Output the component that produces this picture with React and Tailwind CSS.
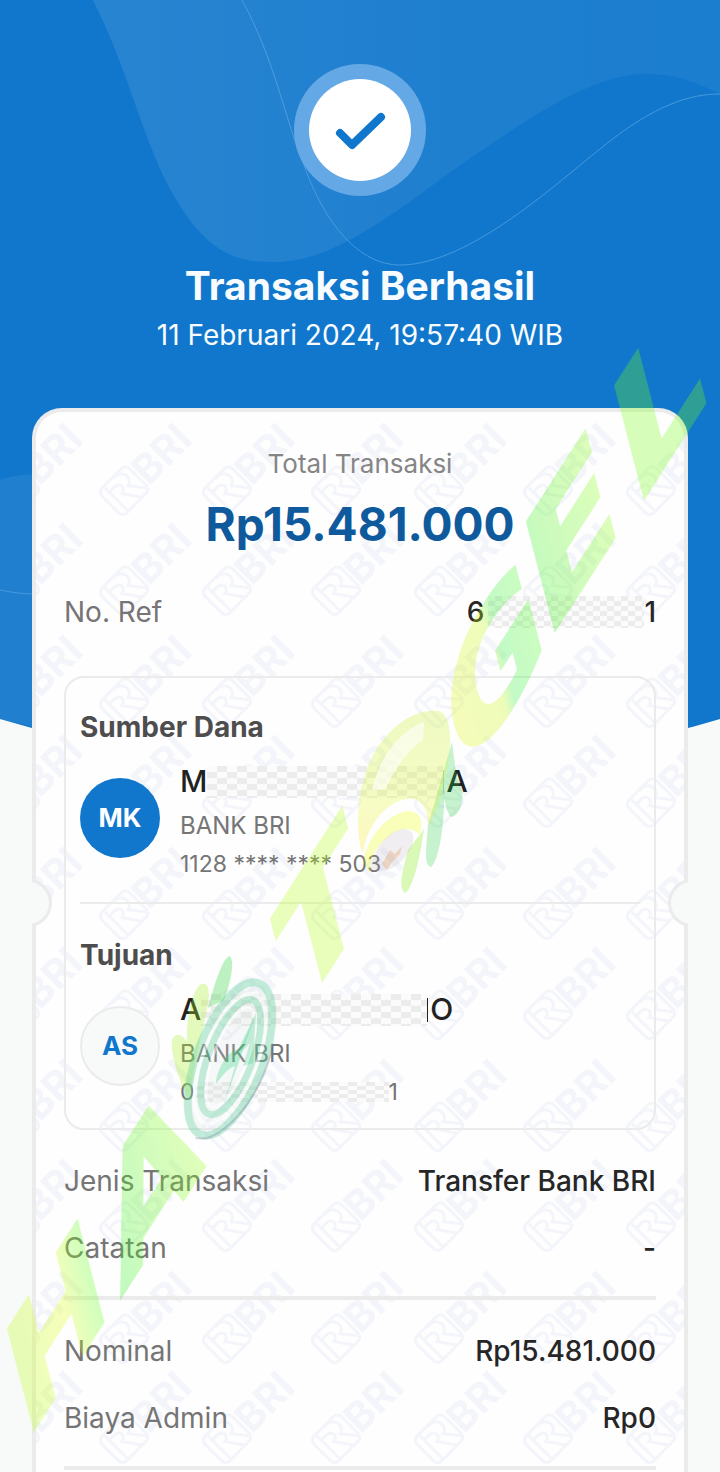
import React from "react";

const LOGO_SPOTS = [
  [28, 67],
  [131, 67],
  [28, 167],
  [131, 167],
];

function Backdrop() {
  return (
    <svg
      className="absolute top-0 left-0 w-full h-auto"
      viewBox="0 0 720 800"
      aria-hidden="true"
    >
      <defs>
        <linearGradient id="wave" x1="90" y1="0" x2="720" y2="0" gradientUnits="userSpaceOnUse">
          <stop offset="0" stopColor="#ffffff" stopOpacity="0.1" />
          <stop offset="0.6" stopColor="#ffffff" stopOpacity="0.06" />
          <stop offset="1" stopColor="#ffffff" stopOpacity="0.05" />
        </linearGradient>
      </defs>
      <path d="M0 0H720V719C500 785 220 785 0 719Z" fill="#1077cc" />
      <path
        d="M93 0C128 70 140 130 168 185C210 265 248 262 280 262C350 258 420 190 490 145C545 107 600 74 645 74C680 74 700 84 720 94V0Z"
        fill="url(#wave)"
      />
      <path
        d="M242 0C275 60 285 120 304 165C325 225 360 265 400 265C470 265 560 180 605 145C655 105 690 94 720 94"
        fill="none"
        stroke="#5fa6e3"
        strokeOpacity="0.7"
      />
      <path d="M0 480C12 476 24 474 40 474V728L0 719Z" fill="#ffffff" fillOpacity="0.07" />
      <path d="M0 590C15 593 24 594 40 594" fill="none" stroke="#5fa6e3" strokeOpacity="0.6" />
    </svg>
  );
}

function LogoPattern() {
  return (
    <svg className="absolute inset-0 h-full w-full" aria-hidden="true">
      <defs>
        <pattern id="bri" x="60" y="11" width="212" height="212" patternUnits="userSpaceOnUse">
          {LOGO_SPOTS.map(([x, y]) => (
            <g key={`${x}-${y}`} transform={`translate(${x} ${y}) rotate(-45)`}>
              <rect x="-20" y="-17" width="39" height="35" rx="6" fill="none" stroke="#f3f5fa" strokeWidth="3" />
              <path
                d="M-12 -16V17M-12 -9H-6C3 -9 3 0 -4 1L7 17M0 -16H5C14 -13 14 -3 6 0L18 15"
                fill="none"
                stroke="#f3f5fa"
                strokeWidth="3"
              />
              <text x="20" y="15" fontSize="40" fontWeight="700" fill="#f3f5fa" fontFamily="Inter, sans-serif">
                BRI
              </text>
            </g>
          ))}
        </pattern>
      </defs>
      <rect width="100%" height="100%" fill="url(#bri)" />
    </svg>
  );
}

const LETTERS = [
  { ch: "H", x: 25, y: 1444, size: 142, fill: "url(#lime)" },
  { ch: "A", x: 121, y: 1298, size: 148, fill: "url(#leaf)" },
  { ch: "T", x: 297, y: 1020, size: 142, fill: "#b4ff18" },
  { ch: "G", x: 463, y: 782, size: 144, fill: "url(#lemon)" },
  { ch: "E", x: 545, y: 646, size: 154, fill: "url(#leaf)" },
  { ch: "L", x: 634, y: 514, size: 158, fill: "#7aff18" },
];

function Watermark() {
  return (
    <svg
      className="pointer-events-none absolute top-0 left-0 h-auto w-full"
      viewBox="0 0 720 1472"
      aria-hidden="true"
    >
      <defs>
        <linearGradient id="lime">
          <stop offset="0" stopColor="#b4ff18" />
          <stop offset="0.6" stopColor="#e1ff18" />
          <stop offset="1" stopColor="#38ff28" />
        </linearGradient>
        <linearGradient id="leaf">
          <stop offset="0" stopColor="#38f028" />
          <stop offset="1" stopColor="#9aff18" />
        </linearGradient>
        <linearGradient id="lemon">
          <stop offset="0" stopColor="#e6f818" />
          <stop offset="0.5" stopColor="#c8f818" />
          <stop offset="0.6" stopColor="#38f040" />
          <stop offset="1" stopColor="#60ff28" />
        </linearGradient>
        <linearGradient id="gold" x1="0" y1="0" x2="0" y2="1">
          <stop offset="0" stopColor="#c8f030" stopOpacity="0.3" />
          <stop offset="0.6" stopColor="#e0fa30" stopOpacity="0.28" />
          <stop offset="1" stopColor="#ffe628" stopOpacity="0.3" />
        </linearGradient>
      </defs>
      <g opacity="0.3" fontFamily="'DejaVu Sans', sans-serif" fontWeight="700">
        {LETTERS.map((l) => (
          <text
            key={l.ch}
            transform={`translate(${l.x} ${l.y}) rotate(-14.5) skewY(-42.8)`}
            fontSize={l.size}
            fill={l.fill}
            stroke={l.fill}
            strokeWidth="3"
          >
            {l.ch}
          </text>
        ))}
      </g>

      <path d="M189 1101C178 1078 170 1052 172 1040C176 1030 184 1036 187 1042C186 1020 192 990 201 984C210 982 210 994 207 1008L196 1060Z" fill="#a8f020" fillOpacity="0.3" />
      <path d="M208 1008C214 985 222 960 229 956C236 958 230 985 224 1000Z" fill="#38d840" fillOpacity="0.32" />
      <g transform="translate(230 1059) rotate(21)">
        <ellipse rx="36" ry="85" fill="#d0dcdc" fillOpacity="0.2" />
        <ellipse rx="33" ry="81" fill="none" stroke="#28c878" strokeOpacity="0.25" strokeWidth="8" />
        <ellipse rx="27" ry="69" fill="none" stroke="#ffffff" strokeOpacity="0.5" strokeWidth="4" />
        <ellipse cy="-2" rx="22" ry="61" fill="none" stroke="#28c878" strokeOpacity="0.25" strokeWidth="7" />
        <ellipse cy="-2" rx="17" ry="53" fill="none" stroke="#ffffff" strokeOpacity="0.5" strokeWidth="3" />
        <path d="M35 -30C44 30 20 84 -4 86" fill="none" stroke="#707098" strokeOpacity="0.3" strokeWidth="2" />
      </g>
      <path d="M256 1013L223 1107L235 1066C228 1068 220 1078 216 1084C216 1070 230 1048 238 1050Z" fill="#28d878" fillOpacity="0.3" />
      <path d="M256 1013L253 1063L243 1066L250 1043L239 1054Z" fill="#28c878" fillOpacity="0.25" />

      <path d="M452 742C455 765 456 780 462 790C464 805 458 816 451 817C446 812 446 802 444 800C444 830 438 862 431 867C424 865 426 850 428 825Z" fill="#28d040" fillOpacity="0.26" />
      <path d="M424 829C420 860 412 890 405 893C397 888 404 866 408 850Z" fill="#90f020" fillOpacity="0.32" />
      <path d="M437 711C451 712 452 740 448 762C444 790 436 812 428 826C428 806 420 797 407 799C385 801 366 829 363 853C354 835 357 780 376 750C392 725 415 709 437 711Z" fill="url(#gold)" />
      <path d="M424 722L423 740C405 752 395 770 385 789L372 790C380 756 400 731 424 722Z" fill="#ffffff" fillOpacity="0.6" />
      <path d="M364 856C372 832 389 813 409 811C422 812 424 824 419 834C410 826 398 828 388 837C375 847 368 862 371 872C367 870 364 864 364 856Z" fill="#f0ff18" fillOpacity="0.3" />
      <path d="M371 870C372 850 388 830 403 829C414 829 416 838 410 850C402 864 386 876 371 870Z" fill="#b8a8b8" fillOpacity="0.18" />
      <path d="M382 864L390 850L395 854L402 846L400 854L392 862L387 870Z" fill="#d87818" fillOpacity="0.22" />
    </svg>
  );
}

function Row({ label, children }) {
  return (
    <div className="flex items-center justify-between">
      <dt className="text-[#757575]">{label}</dt>
      <dd className="flex items-center font-medium text-[#262626]">{children}</dd>
    </div>
  );
}

function Mask({ className }) {
  return (
    <span
      className={`bg-[conic-gradient(#ececec_25%,#fbfbfb_0_50%,#ececec_0_75%,#fbfbfb_0)] ${className}`}
    />
  );
}

function Party({ title, initials, avatarClass, name, account }) {
  return (
    <section>
      <h2 className="text-[28px] leading-9 font-bold text-[#4d4d4d]">{title}</h2>
      <div className="mt-[17px] flex items-center gap-5">
        <div
          className={`mb-2 flex size-20 shrink-0 items-center justify-center rounded-full text-[26px] font-bold ${avatarClass}`}
        >
          {initials}
        </div>
        <div className="text-2xl text-[#757575]">
          <p className="flex h-10 items-center text-[30px] font-medium text-[#222222]">{name}</p>
          <p className="mt-1 leading-10">BANK BRI</p>
          <p className="flex h-9 items-center text-[23px]">{account}</p>
        </div>
      </div>
    </section>
  );
}

export default function App() {
  return (
    <main className="relative flex min-h-screen flex-col overflow-hidden bg-[#f7faf9] font-[Inter,'Liberation_Sans',sans-serif]">
      <Backdrop />
      <header className="relative flex flex-col items-center pt-16 text-[#f8fcff]">
        <div className="flex size-33 items-center justify-center rounded-full bg-[#64a9e6]">
          <div className="flex size-[102px] items-center justify-center rounded-full bg-white">
            <svg width="52" height="40" viewBox="0 0 52 40" fill="none" aria-hidden="true">
              <path d="M6 23L18 35L47 7" stroke="#1077cc" strokeWidth="8" strokeLinecap="round" strokeLinejoin="round" />
            </svg>
          </div>
        </div>
        <h1 className="mt-16 text-[39px] leading-[52px] font-bold">Transaksi Berhasil</h1>
        <p className="text-[28px] leading-[46px]">11 Februari 2024, 19:57:40 WIB</p>
      </header>

      <div className="relative mx-8 mt-[50px] flex grow flex-col overflow-hidden">
        <div className="relative grow overflow-hidden rounded-t-[30px] border-4 border-b-0 border-[#ebebeb] bg-[#fefeff] px-7 pt-8">
          <LogoPattern />
          <div className="relative text-[28px] leading-10">
            <p className="text-center text-[26px] text-[#858585]">Total Transaksi</p>
            <p className="text-center text-[46px] leading-20 font-bold text-[#0e5a9d]">Rp15.481.000</p>
            <dl className="mt-7">
              <Row label="No. Ref">
                6
                <Mask className="ml-1 h-8 w-39 bg-size-[14px_10px]" />1
              </Row>
            </dl>

            <div className="mt-[44px] rounded-[20px] border-2 border-[#ebebeb] px-[14px] pt-[31px] pb-[18px]">
              <Party
                title="Sumber Dana"
                initials="MK"
                avatarClass="bg-[#1077cc] text-white"
                name={
                  <>
                    M
                    <Mask className="h-8 w-59 bg-size-[20px_12px]" />
                    <span className="mr-[2px] h-6 w-px bg-[#c8c8c8]" />A
                  </>
                }
                account="1128 **** **** 503"
              />
              <hr className="mt-5 mb-[33px] border-t-2 border-[#ebebeb]" />
              <Party
                title="Tujuan"
                initials="AS"
                avatarClass="border-2 border-[#ebebeb] bg-[#f7faf9] text-[#1077cc]"
                name={
                  <>
                    A
                    <Mask className="h-8 w-[226px] bg-size-[20px_12px]" />
                    <span className="mr-[2px] h-6 w-px bg-[#222222]" />O
                  </>
                }
                account={
                  <>
                    0
                    <Mask className="h-5 w-[194px] bg-size-[18px_8px]" />1
                  </>
                }
              />
            </div>

            <dl className="mt-[31px] flex flex-col gap-[27px] border-b-4 border-[#ebebeb] pb-7">
              <Row label="Jenis Transaksi">Transfer Bank BRI</Row>
              <Row label="Catatan">-</Row>
            </dl>
            <dl className="mt-[31px] flex flex-col gap-[27px] border-b-4 border-[#ebebeb] pb-7">
              <Row label="Nominal">Rp15.481.000</Row>
              <Row label="Biaya Admin">Rp0</Row>
            </dl>
          </div>
        </div>
        <span className="absolute top-[471px] -left-7 size-12 rounded-full border-3 border-[#ebebeb] bg-[#f7faf9]" />
        <span className="absolute top-[471px] -right-7 size-12 rounded-full border-3 border-[#ebebeb] bg-[#f7faf9]" />
      </div>
      <Watermark />
    </main>
  );
}
